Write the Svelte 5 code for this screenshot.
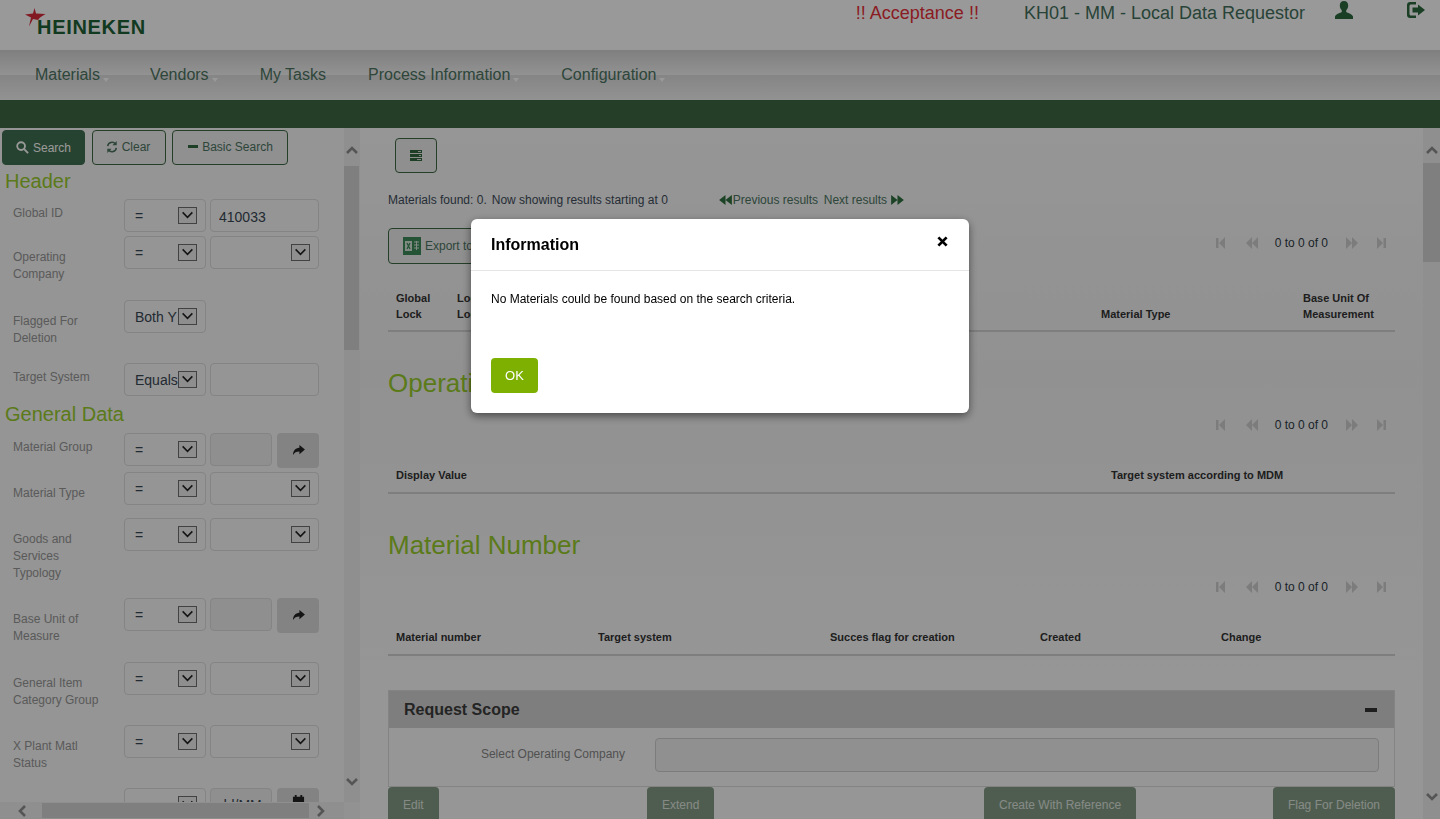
<script>
  const headerRows = [
    { label: 'Global ID', op: '=', value: '410033', kind: 'input', short: true },
    { label: 'Operating Company', op: '=', kind: 'select', tall: true },
    { label: 'Flagged For Deletion', op: 'Both Y', kind: 'none' },
    { label: 'Target System', op: 'Equals', kind: 'input', short: true }
  ];
  const generalRows = [
    { label: 'Material Group', op: '=', kind: 'lookup', short: true },
    { label: 'Material Type', op: '=', kind: 'select' },
    { label: 'Goods and Services Typology', op: '=', kind: 'select' },
    { label: 'Base Unit of Measure', op: '=', kind: 'lookup', tall: true },
    { label: 'General Item Category Group', op: '=', kind: 'select' },
    { label: 'X Plant Matl Status', op: '=', kind: 'select' },
    { label: '', op: '=', kind: 'date', value: 'dd/MM' }
  ];
  const navItems = [
    { name: 'Materials', caret: true },
    { name: 'Vendors', caret: true },
    { name: 'My Tasks', caret: false },
    { name: 'Process Information', caret: true },
    { name: 'Configuration', caret: true }
  ];
</script>

{#snippet chevron(dir)}
  <svg class="chev" viewBox="0 0 16 16" width="16" height="16">
    {#if dir === 'up'}<polyline points="3,11 8,6 13,11" />{/if}
    {#if dir === 'down'}<polyline points="3,5 8,10 13,5" />{/if}
    {#if dir === 'left'}<polyline points="11,3 6,8 11,13" />{/if}
    {#if dir === 'right'}<polyline points="5,3 10,8 5,13" />{/if}
  </svg>
{/snippet}

{#snippet selectBox(text, cls)}
  <div class="ctl sel {cls}">
    <span class="sel-text">{text}</span>
    <span class="sel-arrow">
      <svg viewBox="0 0 19 17" width="17" height="15"><polyline points="4,5 9.5,10.5 15,5" /></svg>
    </span>
  </div>
{/snippet}

{#snippet filterRow(row)}
  <div class="row" class:short={row.short} class:tall={row.tall}>
    <div class="row-label">{row.label}</div>
    <div class="row-ctls">
      {@render selectBox(row.op, 'op')}
      {#if row.kind === 'input'}
        <input class="ctl val" value={row.value ?? ''} />
      {:else if row.kind === 'select'}
        {@render selectBox('', 'val')}
      {:else if row.kind === 'lookup' || row.kind === 'date'}
        <input class="ctl val-small" disabled value={row.value ?? ''} />
        <button class="go">
          {#if row.kind === 'lookup'}
            <svg viewBox="0 0 14 12" width="13" height="11"><path d="M8 0l6 5-6 5V7C4.500 7 2.500 8 1 11 1 6.500 3.500 3.300 8 3z" /></svg>
          {:else}
            <svg class="cal" viewBox="0 0 14 14" width="13" height="13"><path d="M1 2h2V0h2v2h4V0h2v2h2v12H1z" /></svg>
          {/if}
        </button>
      {/if}
    </div>
  </div>
{/snippet}

{#snippet pager()}
  <div class="pager">
    <svg width="9" height="12" viewBox="0 0 9 12"><path d="M0 1h2.500v10H0zM9 0v12L3 6z" /></svg>
    <svg class="p2" width="12" height="12" viewBox="0 0 12 12"><path d="M6 0v12L0 6zM12 0v12L6 6z" /></svg>
    <span class="p-text">0 to 0 of 0</span>
    <svg class="p3" width="12" height="12" viewBox="0 0 12 12"><path d="M0 0v12l6-6zM6 0v12l6-6z" /></svg>
    <svg class="p4" width="9" height="12" viewBox="0 0 9 12"><path d="M0 0v12l6-6zM6.500 1H9v10H6.500z" /></svg>
  </div>
{/snippet}

<div class="page">
  <header class="top">
    <div class="logo">
      <svg class="star" viewBox="0 0 21 19" width="21" height="19">
        <polygon points="9.500,0 11,5.500 20.500,6 15,9.500 13,12 8,11 4,18.500 6,9.500 0,6.500 8,5.500" />
      </svg>
      <span class="logo-text">HEINEKEN</span>
    </div>
    <div class="top-right">
      <span class="env">!! Acceptance !!</span>
      <span class="role">KH01 - MM - Local Data Requestor</span>
      <svg class="user" viewBox="0 0 18 18" width="18" height="18">
        <path d="M9 0c2.800 0 4.200 2 4.200 4.600 0 2-.8 3.700-2 4.800v1.500c1 .8 5.800 1.700 6.800 4.600V18H0v-2.500c1-2.900 5.800-3.800 6.800-4.600V9.400c-1.200-1.100-2-2.800-2-4.800C4.800 2 6.200 0 9 0z" />
      </svg>
      <svg class="logout" viewBox="0 0 18 16" width="18" height="16">
        <path d="M3 0h6v2.500H4c-.8 0-1.500.7-1.500 1.500v8c0 .8.700 1.500 1.500 1.500h5V16H3c-1.700 0-3-1.300-3-3V3c0-1.700 1.300-3 3-3z" />
        <path d="M11 2.500L18 8l-7 5.500V10.500H5.500v-5H11z" />
      </svg>
    </div>
  </header>

  <nav class="nav">
    {#each navItems as item}
      <a class="nav-item" class:caret={item.caret} href="#top">{item.name}</a>
    {/each}
  </nav>

  <div class="band"></div>

  <main class="main">
    <aside class="side">
      <div class="side-view">
        <div class="toolbar">
          <button class="btn solid">
            <svg viewBox="0 0 14 14" width="13" height="13"><circle cx="5.500" cy="5.500" r="4.200" /><line x1="8.800" y1="8.800" x2="13" y2="13" /></svg>
            Search
          </button>
          <button class="btn line">
            <svg viewBox="0 0 14 14" width="12" height="12"><path d="M2 6a5 5 0 0 1 9-2.500M12 8a5 5 0 0 1-9 2.500" /><path class="fill" d="M12.500 0v5h-5zM1.500 14V9h5z" /></svg>
            Clear
          </button>
          <button class="btn line wide">
            <span class="minus"></span>
            Basic Search
          </button>
        </div>
        <h3 class="group">Header</h3>
        {#each headerRows as row}
          {@render filterRow(row)}
        {/each}
        <h3 class="group general">General Data</h3>
        {#each generalRows as row}
          {@render filterRow(row)}
        {/each}
      </div>
      <div class="vbar side-v">
        {@render chevron('up')}
        <div class="vtrack"><div class="vthumb side-thumb"></div></div>
        {@render chevron('down')}
      </div>
      <div class="hbar">
        {@render chevron('left')}
        <div class="hthumb"></div>
        {@render chevron('right')}
      </div>
      <div class="corner"></div>
    </aside>

    <section class="content">
      <button class="icon-btn" aria-label="Columns">
        <svg viewBox="0 0 12 11" width="12" height="11">
          <path d="M0 0h12v3H0zM0 4h12v3H0zM0 8h12v3H0z" />
          <path class="hole" d="M8 1h3v1H8zM9 5h2v1H9zM7 9h4v1H7z" />
        </svg>
      </button>

      <div class="found">
        <span>Materials found: 0.</span>
        <span class="found-now">Now showing results starting at 0</span>
        <span class="results prev">
          <svg width="13" height="10" viewBox="0 0 14 11"><path d="M7 0v11L0 5.500zM14 0v11L7 5.500z" /></svg>
          Previous results
        </span>
        <span class="results next">
          Next results
          <svg width="13" height="10" viewBox="0 0 14 11"><path d="M0 0v11l7-5.500zM7 0v11l7-5.500z" /></svg>
        </span>
      </div>

      <div class="export-row">
        <button class="export">
          <svg viewBox="0 0 18 18" width="18" height="18">
            <rect width="18" height="18" fill="#3f8a5a" />
            <path d="M2 4h7v10H2z" fill="#d8e8dc" />
            <path d="M4 6l3 6M7 6l-3 6" stroke="#3f8a5a" stroke-width="1.300" />
            <path d="M11 5h5M11 8h5M11 11h5M13.500 4v9" stroke="#d8e8dc" />
          </svg>
          Export to Excel
        </button>
        {@render pager()}
      </div>

      <div class="thead t1">
        <span>Global<br />Lock</span>
        <span>Local<br />Lock</span>
        <span>Material Type</span>
        <span>Base Unit Of<br />Measurement</span>
      </div>

      <h2 class="title t-op">Operating Company</h2>
      {@render pager()}
      <div class="thead t2">
        <span>Display Value</span>
        <span>Target system according to MDM</span>
      </div>

      <h2 class="title t-mat">Material Number</h2>
      {@render pager()}
      <div class="thead t3">
        <span>Material number</span>
        <span>Target system</span>
        <span>Succes flag for creation</span>
        <span>Created</span>
        <span>Change</span>
      </div>

      <div class="panel">
        <div class="panel-head">
          <span>Request Scope</span>
          <span class="panel-minus"></span>
        </div>
        <div class="panel-body">
          <label class="panel-label" for="opco">Select Operating Company</label>
          <input id="opco" class="panel-input" disabled />
        </div>
      </div>

      <div class="actions">
        <div><button class="act">Edit</button></div>
        <div><button class="act">Extend</button></div>
        <div><button class="act">Create With Reference</button></div>
        <button class="act">Flag For Deletion</button>
      </div>
    </section>

    <div class="vbar page-v">
      {@render chevron('up')}
      <div class="vtrack"><div class="vthumb page-thumb"></div></div>
      {@render chevron('down')}
    </div>
  </main>

  <div class="overlay">
    <div class="modal">
      <div class="modal-head">
        <span>Information</span>
        <svg viewBox="0 0 12 12" width="11" height="11"><path d="M1.500 1.500l9 9M10.500 1.500l-9 9" /></svg>
      </div>
      <div class="modal-body">No Materials could be found based on the search criteria.</div>
      <button class="ok">OK</button>
    </div>
  </div>
</div>

<style>
  :global(body) {
    margin: 0;
    font-family: "Liberation Sans", Arial, sans-serif;
    color: #333;
  }

  .page {
    height: 819px;
    overflow: hidden;
    display: flex;
    flex-direction: column;
  }

  /* top header */
  .top {
    height: 50px;
    flex: none;
    background: #fff;
    display: flex;
    justify-content: space-between;
  }

  .logo {
    position: relative;
    margin-left: 37px;
    padding-top: 15px;
  }

  .star {
    position: absolute;
    left: -12px;
    top: 8px;
    fill: #d8293a;
  }

  .logo-text {
    position: relative;
    font-size: 20px;
    line-height: 24px;
    font-weight: 700;
    letter-spacing: 0.7px;
    color: #1d6236;
  }

  .top-right {
    display: flex;
    align-items: flex-start;
    padding-right: 15px;
    font-size: 18px;
    line-height: 26px;
  }

  .env {
    color: #e8303a;
  }

  .role {
    margin-left: 45px;
    color: #43705c;
  }

  .user {
    margin: 1px 0 0 30px;
    fill: #2c6a3c;
  }

  .logout {
    margin: 2px 0 0 54px;
    fill: #2c6a3c;
  }

  /* nav */
  .nav {
    height: 50px;
    flex: none;
    display: flex;
    align-items: center;
    padding-left: 35px;
    box-sizing: border-box;
    background:
      linear-gradient(#d4d4d4, #f4f4f4) top / 100% 25px no-repeat,
      linear-gradient(#dedede, #f4f4f4) bottom / 100% 25px no-repeat;
  }

  .nav-item {
    position: relative;
    font-size: 16px;
    color: #4d7562;
    text-decoration: none;
  }

  .nav-item:nth-child(1) { margin-right: 50px; }
  .nav-item:nth-child(2) { margin-right: 51px; }
  .nav-item:nth-child(3) { margin-right: 42px; }
  .nav-item:nth-child(4) { margin-right: 51px; }

  .nav-item.caret::after {
    content: '';
    position: absolute;
    left: calc(100% + 3px);
    top: 12px;
    border: 3px solid transparent;
    border-top: 4px solid #fff;
  }

  .band {
    height: 28px;
    flex: none;
    background: #3c6842;
  }

  /* main split */
  .main {
    flex: 1;
    min-height: 0;
    display: flex;
    background: linear-gradient(#fafafa, #f2f2f2 35%, #fbfbfb 85%);
  }

  .side {
    width: 360px;
    flex: none;
    display: grid;
    grid-template-columns: 344px 16px;
    grid-template-rows: 674px 17px;
    background: #f8f8f8;
  }

  .side-view {
    overflow: hidden;
  }

  .toolbar {
    display: flex;
    gap: 6px;
    padding: 2px 0 2px 2px;
  }

  .btn {
    height: 35px;
    padding: 0;
    border-radius: 4px;
    font: 12px "Liberation Sans", Arial, sans-serif;
    display: flex;
    align-items: center;
    justify-content: center;
    gap: 4px;
    box-sizing: border-box;
  }

  .btn svg {
    fill: none;
    stroke: currentColor;
    stroke-width: 1.800;
  }

  .btn .fill {
    fill: currentColor;
    stroke: none;
  }

  .solid {
    width: 83px;
    margin-right: 1px;
    background: #3f7050;
    border: 1px solid #3f7050;
    color: #fff;
  }

  .solid svg {
    stroke-width: 2;
  }

  .line {
    width: 74px;
    background: #f0f0f0;
    border: 1px solid #3c6842;
    color: #4d7562;
    padding: 0 2px 2px 0;
  }

  .wide {
    width: 116px;
    padding: 0 0 2px 1px;
  }

  .minus {
    width: 10px;
    height: 3px;
    background: #2f6a40;
  }

  .group {
    margin: 3px 0 7px 5px;
    font-size: 20px;
    line-height: 22px;
    font-weight: 400;
    color: #98cc2c;
  }

  .group.general {
    margin-top: 7px;
    margin-bottom: 8px;
  }

  .row {
    display: flex;
    align-items: flex-start;
    margin-bottom: 4px;
  }

  .row.tall {
    margin-bottom: 5px;
  }

  .row-label {
    width: 124px;
    flex: none;
    box-sizing: border-box;
    padding: 13px 20px 12px 13px;
    font-size: 12px;
    line-height: 17px;
    color: #969696;
  }

  .row.short {
    min-height: 33px;
  }

  .row.short .row-label {
    padding: 6px 0 0 13px;
  }

  .row-ctls {
    display: flex;
    gap: 4px;
  }

  .ctl {
    height: 33px;
    box-sizing: border-box;
    border: 1px solid #dcdcdc;
    border-radius: 4px;
    background: #f8f8f8;
    font: 14px "Liberation Sans", Arial, sans-serif;
    color: #3a4754;
    margin: 0;
  }

  .sel {
    position: relative;
    display: flex;
    align-items: center;
    padding: 0 0 0 10px;
    overflow: hidden;
  }

  .sel-text {
    white-space: nowrap;
  }

  .sel-arrow {
    position: absolute;
    right: 8px;
    top: 7px;
    width: 19px;
    height: 17px;
    box-sizing: border-box;
    border: 1px solid #6e6e6e;
    background: #ededed;
    display: flex;
    align-items: center;
    justify-content: center;
  }

  .sel-arrow polyline {
    fill: none;
    stroke: #222;
    stroke-width: 1.800;
  }

  .op {
    width: 82px;
  }

  .val {
    width: 109px;
  }

  input.val {
    padding: 2px 0 0 8px;
  }

  .val-small {
    width: 62px;
    padding: 0 0 0 8px;
    background: #eeeeee;
  }

  .go {
    width: 42px;
    height: 35px;
    margin-left: 1px;
    padding: 0;
    border: 0;
    border-radius: 4px;
    background: #dadada;
    display: flex;
    align-items: center;
    justify-content: center;
    fill: #222;
  }

  .cal {
    margin-bottom: 9px;
  }

  /* fake scrollbars */
  .vbar {
    display: flex;
    flex-direction: column;
    background: #eeeeee;
  }

  .side-v {
    padding: 14px 0 12px;
    align-items: center;
  }

  .vtrack {
    flex: 1;
    width: 100%;
    margin-top: 8px;
  }

  .vthumb {
    background: #d4d4d4;
  }

  .side-thumb {
    height: 184px;
    width: 15px;
  }

  .page-v {
    width: 17px;
    flex: none;
    padding: 14px 0 14px;
    align-items: center;
  }

  .page-thumb {
    height: 99px;
    margin-top: -3px;
  }

  .hbar {
    display: flex;
    align-items: center;
    padding-left: 14px;
    background: #eeeeee;
  }

  .hthumb {
    width: 267px;
    height: 15px;
    margin: 0 4px 0 12px;
    background: #d4d4d4;
  }

  .corner {
    background: #f4f4f4;
  }

  .chev {
    flex: none;
  }

  .chev polyline {
    fill: none;
    stroke: #8e8e8e;
    stroke-width: 2.600;
  }

  /* right content */
  .content {
    flex: 1;
    min-width: 0;
    padding: 10px 28px 0;
    overflow: hidden;
  }

  .icon-btn {
    display: flex;
    align-items: center;
    justify-content: center;
    width: 42px;
    height: 35px;
    margin-left: 7px;
    padding: 0;
    border: 1px solid #3c6842;
    border-radius: 4px;
    background: #eeeeee;
    fill: #2f6a40;
  }

  .icon-btn .hole {
    fill: #dddddd;
  }

  .found {
    display: flex;
    align-items: center;
    margin-top: 19px;
    height: 16px;
    font-size: 12px;
    color: #3f4d5a;
  }

  .found-now {
    margin-left: 5px;
    width: 227px;
  }

  .results {
    display: flex;
    align-items: center;
    gap: 1px;
    color: #4d7562;
  }

  .results svg {
    fill: #2f7040;
  }

  .prev {
    width: 105px;
  }

  .next {
    gap: 4px;
  }

  .export-row {
    display: flex;
    align-items: flex-start;
    justify-content: space-between;
    margin-top: 20px;
    height: 36px;
  }

  .export-row .pager {
    margin-top: 7px;
  }

  .export {
    display: flex;
    align-items: center;
    gap: 4px;
    height: 36px;
    width: 150px;
    padding: 0 0 0 14px;
    border: 1px solid #3c6842;
    border-radius: 4px;
    background: #eeeeee;
    color: #4d7562;
    font: 12px "Liberation Sans", Arial, sans-serif;
  }

  .pager {
    display: flex;
    align-items: center;
    justify-content: flex-end;
    height: 16px;
    padding-right: 9px;
    fill: #cfcfcf;
  }

  .p2 {
    margin-left: 21px;
  }

  .p-text {
    margin: 0 18px 0 17px;
    font-size: 12px;
    color: #2e3a46;
  }

  .p4 {
    margin-left: 19px;
  }

  .title + .pager {
    margin-top: 19px;
  }

  .thead {
    display: grid;
    align-items: end;
    padding: 0 0 9px 8px;
    border-bottom: 2px solid #d2d2d2;
    font-size: 11px;
    line-height: 16px;
    font-weight: 700;
    color: #333;
  }

  .t1 {
    margin-top: 26px;
    padding-bottom: 8px;
    grid-template-columns: 61px 644px 202px 1fr;
  }

  .t2,
  .t3 {
    margin-top: 34px;
  }

  .t2 {
    grid-template-columns: 715px 1fr;
  }

  .t3 {
    grid-template-columns: 202px 232px 210px 181px 1fr;
  }

  .title {
    margin: 0;
    font-size: 26px;
    line-height: 30px;
    font-weight: 400;
    color: #98cc2c;
  }

  .t-op {
    margin-top: 36px;
  }

  .t-mat {
    margin-top: 36px;
  }

  .panel {
    margin-top: 34px;
    border: 1px solid #dadada;
    box-sizing: border-box;
    height: 97px;
  }

  .panel-head {
    height: 37px;
    background: #d2d2d2;
    display: flex;
    align-items: center;
    justify-content: space-between;
    padding: 0 17px 0 15px;
    font-size: 16px;
    font-weight: 700;
    color: #3c3c3c;
  }

  .panel-minus {
    width: 12px;
    height: 4px;
    background: #333;
  }

  .panel-body {
    display: flex;
    align-items: center;
    padding: 10px 15px 0 0;
  }

  .panel-label {
    width: 236px;
    margin-bottom: 2px;
    text-align: right;
    font-size: 12px;
    color: #888888;
  }

  .panel-input {
    flex: 1;
    height: 34px;
    margin-left: 30px;
    box-sizing: border-box;
    border: 1px solid #cfcfcf;
    border-radius: 4px;
    background: #f0f0f0;
  }

  .actions {
    display: grid;
    grid-template-columns: 259px 337px 1fr auto;
  }

  .act {
    height: 36px;
    padding: 0 15px;
    border: 0;
    border-radius: 4px;
    background: #829c84;
    color: #e0e6e0;
    font: 12px "Liberation Sans", Arial, sans-serif;
  }

  /* modal */
  .overlay {
    position: fixed;
    inset: 0;
    background: rgba(0, 0, 0, 0.4);
  }

  .modal {
    width: 498px;
    height: 194px;
    margin: 219px 0 0 471px;
    box-sizing: border-box;
    background: #fff;
    border-radius: 6px;
    box-shadow: 0 3px 9px rgba(0, 0, 0, 0.5);
  }

  .modal-head {
    height: 52px;
    box-sizing: border-box;
    padding: 0 21px 0 20px;
    border-bottom: 1px solid #e5e5e5;
    display: flex;
    align-items: center;
    justify-content: space-between;
    font-size: 16px;
    font-weight: 700;
    color: #000;
  }

  .modal-head svg {
    margin-bottom: 7px;
    fill: none;
    stroke: #000;
    stroke-width: 3;
  }

  .modal-body {
    padding: 20px 20px 0;
    height: 67px;
    font-size: 12px;
    line-height: 16px;
    color: #000;
  }

  .ok {
    display: block;
    width: 47px;
    height: 35px;
    margin: 0 0 0 20px;
    padding: 0;
    border: 0;
    border-radius: 4px;
    background: #7db000;
    color: #fff;
    font: 13px "Liberation Sans", Arial, sans-serif;
  }
</style>
